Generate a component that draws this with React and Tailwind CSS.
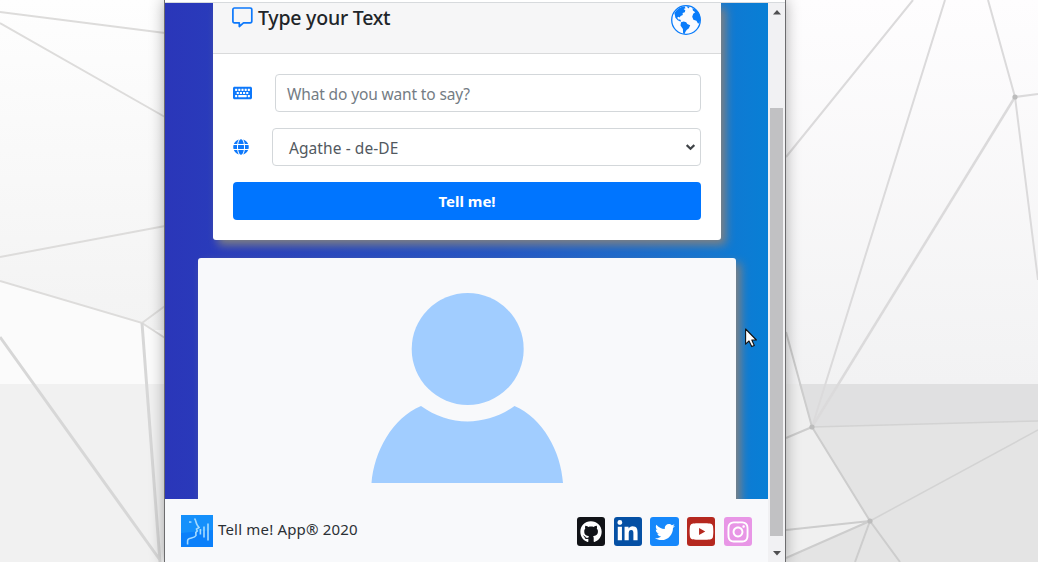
import { FaKeyboard, FaGlobe, FaGithub, FaLinkedinIn, FaTwitter, FaYoutube, FaInstagram } from "react-icons/fa";

function Backdrop() {
  return (
    <svg className="absolute inset-0" width="1038" height="562" viewBox="0 0 1038 562" fill="none">
      <defs>
        <linearGradient id="leftTop" x1="0" y1="0" x2="0" y2="1">
          <stop offset="0" stopColor="#fefefe" />
          <stop offset="1" stopColor="#f3f3f3" />
        </linearGradient>
        <linearGradient id="rightTop" x1="0" y1="0" x2="0" y2="1">
          <stop offset="0" stopColor="#fefdfe" />
          <stop offset="1" stopColor="#f2f2f3" />
        </linearGradient>
      </defs>
      <rect width="170" height="330" fill="url(#leftTop)" />
      <path d="M0 281L142 323L170 340V384H0Z" fill="#fbfbfb" />
      <rect y="384" width="170" height="178" fill="#f1f1f1" />
      <rect x="780" width="258" height="384" fill="url(#rightTop)" />
      <rect x="780" y="384" width="258" height="178" fill="#e4e4e4" />
      <path d="M798 384H1038V421L812 427Z" fill="#e0e0e1" />
      <path d="M780 384H799L812 427L870 521L780 531Z" fill="#efefef" />
      <path d="M786 531L870 521L786 558Z" fill="#f0f0f0" />
      <g stroke="#dddcdb" strokeWidth="2">
        <path d="M0 12L165 33M0 23L165 117M0 257L165 226M0 281L142 323L165 306M142 323L165 338" />
        <path d="M0 337L160 560M142 323L160 562" stroke="#d7d7d7" strokeWidth="3" />
      </g>
      <g stroke="#dbdadb" strokeWidth="2">
        <path d="M786 157L913 0M945 0L812 427M1015 97L988 0M1015 97L1038 280M1015 97L1038 94" />
        <path d="M812 427L1015 97" strokeWidth="2.5" />
        <path d="M812 427L786 332M812 427L870 521L900 562M786 438L812 427M786 530L870 521L786 558M870 521L855 562" stroke="#cdcdcd" />
        <path d="M812 427L1038 421M870 521L1038 430" stroke="#d3d3d3" strokeWidth="1.5" />
      </g>
      <g fill="#bcbcbc">
        <circle cx="1015" cy="97" r="2.6" />
        <circle cx="812" cy="427" r="2.6" />
        <circle cx="870" cy="521" r="2.6" />
      </g>
    </svg>
  );
}

function CommentIcon() {
  return (
    <svg className="mt-[7px] shrink-0" width="21" height="21" viewBox="0 0 21 21" fill="none" stroke="#0d78fb" strokeWidth="1.7" strokeLinejoin="round">
      <path d="M2.4 1H18.1C19.1 1 19.8 1.7 19.8 2.6V14.2C19.8 15.1 19.1 15.8 18.1 15.8H11.5L7.3 19.5V15.8H2.4C1.5 15.8 .9 15.1 .9 14.2V2.6C.9 1.7 1.5 1 2.4 1Z" />
    </svg>
  );
}

function EarthIcon() {
  return (
    <svg width="32" height="32" viewBox="0 0 32 32" fill="#0a7cfa">
      <circle cx="16" cy="16" r="14.3" fill="#fafbff" stroke="#0a7cfa" strokeWidth="1.3" />
      <path d="M4.4 9C7 5 10.6 2.8 14.5 2.3L15.5 4.2L13.6 5L15.3 6.2L14.8 8.2L12.6 9.1L12.8 10.9L10.6 12.1L9.7 13.6L8.5 12.8L7.1 13.8L8.4 15.5L10.1 15.4L11.2 17.3L10.2 17.5L7.7 16.3L5.4 13.7Z" />
      <path d="M11 18.2L13.7 17.4L16.2 18.2L17.3 20L20.2 21.3L18.9 24.3L16.6 26L15.2 28.2L14.6 30L13.1 29.4L12.9 25.1L10.5 21.6Z" />
      <path d="M25.8 5.7L22.4 4L22.9 6.4L25.2 8.3L23.2 9.7L22.2 12.8L23.4 15.8L26.4 16.8L28 19.5L29.4 19.2L30.5 15.2L29.7 11.1L28 8Z" />
      <path d="M16.4 2.3L19.8 2.6L18.5 4.5Z" />
    </svg>
  );
}

function VoiceLogo() {
  return (
    <svg className="shrink-0" width="32" height="32" viewBox="0 0 32 32">
      <rect width="32" height="32" fill="#0b80fa" />
      <path d="M0 0H32V15L0 18Z" fill="#1590fb" />
      <g fill="none" stroke="#a6dbff" strokeWidth="1.6">
        <path d="M13.500 3.500C15.500 6 14.500 8 16.500 10.500L18 12.500L15.500 14L16.200 16L14.800 17.500L15 20.500C13.500 23.500 8.500 22.500 7 24.500C6.200 25.800 6.700 28 6.600 29.500" />
        <path d="M19.400 14V19.500M23 11.500V22.500M27 8.500V25.500" />
      </g>
      <rect x="8" y="6.300" width="2.400" height="1.500" fill="#a6dbff" />
    </svg>
  );
}

const socials = [
  { name: "github", Icon: FaGithub, tile: "bg-[#111317]", glyph: "size-[22px]" },
  { name: "linkedin", Icon: FaLinkedinIn, tile: "bg-[#0550a4]", glyph: "size-[23px]" },
  { name: "twitter", Icon: FaTwitter, tile: "bg-[#1688fb]", glyph: "size-5" },
  { name: "youtube", Icon: FaYoutube, tile: "bg-[#b5281f]", glyph: "size-[25px]" },
  { name: "instagram", Icon: FaInstagram, tile: "bg-[#e896e6]", glyph: "size-[24px]" },
];

function TextCard() {
  return (
    <section className="relative mr-[47px] ml-12 h-[237px] rounded-b-[3px] bg-white shadow-[5px_5px_10px_#808080]">
      <header className="flex h-[51px] justify-between border-b border-[#d9dadb] bg-[#f6f6f7] pr-[19px] pl-[19px]">
        <div className="-mt-[3px] flex">
          <CommentIcon />
          <h1 className="ml-[5px] pt-[3px] text-[19.5px] leading-[30px] font-medium tracking-[-0.22px] whitespace-nowrap text-[#212529]">Type your Text</h1>
        </div>
        <div className="pt-px"><EarthIcon /></div>
      </header>
      <div className="px-5 pt-5">
        <div className="flex h-[38px]">
          <FaKeyboard className="mt-[9px] h-5 w-[19px] text-[#0d78fb]" />
          <div className="ml-[23px] flex flex-1 items-center rounded-[4px] border border-[#d3d7da] pt-[3px] pr-3 pl-[11px] text-[15.5px] tracking-[-0.14px] text-[#747c84]">What do you want to say?</div>
        </div>
        <div className="mt-4 flex h-[38px]">
          <FaGlobe className="mt-[11px] size-4 text-[#0d78fb]" />
          <div className="ml-[23px] flex flex-1 items-center justify-between rounded-[4px] border border-[#d3d7da] pr-[5px] pl-4 text-[15.5px] tracking-[0.08px] text-[#52595f]">
            <span className="pt-[3px]">Agathe - de-DE</span>
            <svg width="9" height="7" viewBox="0 0 9 7" fill="none" stroke="#3f4347" strokeWidth="2.2"><path d="M.7 1.1L4.5 4.8L8.3 1.1" /></svg>
          </div>
        </div>
        <button className="mt-4 flex h-[38px] w-full items-center justify-center rounded-[4px] bg-[#0075ff] text-[15px] font-bold text-white">Tell me!</button>
      </div>
    </section>
  );
}

function AvatarCard() {
  return (
    <section className="relative mr-8 ml-[33px] mt-[18px] h-[300px] rounded-[3px] bg-[#f8f9fb] pt-[34px] shadow-[5px_5px_10px_#808080]">
      <svg className="ml-[173px]" width="194" height="192" viewBox="0 0 194 192" fill="#a1cdff">
        <ellipse cx="96.7" cy="57" rx="56" ry="56" />
        <path d="M.5 191C3 160 21 126 50 114C78 134.500 115 134.500 143.500 114C172 126 190 160 192 191Z" />
      </svg>
    </section>
  );
}

export default function App() {
  return (
    <div className="relative flex h-[562px] w-[1038px] justify-start overflow-hidden bg-white font-['Noto_Sans','Open_Sans',sans-serif]">
      <Backdrop />
      <main className="relative ml-[164px] flex h-full w-[622px] flex-col border-x border-[#6c6c6e] bg-white shadow-[0_0_14px_rgba(0,0,0,0.32)]">
        <div className="h-[3px] shrink-0 border-b border-[#d7dadd] bg-white" />
        <div className="flex min-h-0 flex-1">
          <div className="flex w-[603px] flex-col">
            <div className="h-[496px] overflow-hidden bg-linear-to-r from-[#2a36b9] via-[#2255c5] via-55% to-[#087fd5]">
              <TextCard />
              <AvatarCard />
            </div>
            <footer className="flex h-[63px] items-center justify-between bg-[#f8f9fb] pr-4 pl-4">
              <div className="flex items-center">
                <VoiceLogo />
                <span className="ml-[5px] pb-[3px] text-[15px] tracking-[0.18px] text-[#2b3035]">Tell me! App® 2020</span>
              </div>
              <div className="flex gap-[8.5px] pt-0.5">
                {socials.map(({ name, Icon, tile, glyph }) => (
                  <div key={name} className={"flex size-[28.2px] items-center justify-center rounded-[3px] text-white " + tile}>
                    <Icon className={glyph} />
                  </div>
                ))}
              </div>
            </footer>
          </div>
          <div className="flex flex-1 flex-col items-center bg-[#f1f1f3]">
            <svg className="mt-[7px]" width="8" height="5" viewBox="0 0 8 5" fill="#4f4f51"><path d="M4 0L8 4.500H0Z" /></svg>
            <div className="mt-[93px] h-[428px] w-[13px] bg-[#c1c1c3]" />
            <svg className="mt-[15px]" width="8" height="5" viewBox="0 0 8 5" fill="#4f4f51"><path d="M0 0H8L4 4.500Z" /></svg>
          </div>
        </div>
      </main>
      <svg className="absolute top-[328px] left-[745px]" width="14" height="21" viewBox="0 0 14 21">
        <path d="M.6 1V16.200L4 13L6.700 18.600L9.300 17.400L6.800 12H11.400Z" fill="#fff" stroke="#111" strokeWidth="1.100" strokeLinejoin="round" />
      </svg>
    </div>
  );
}
